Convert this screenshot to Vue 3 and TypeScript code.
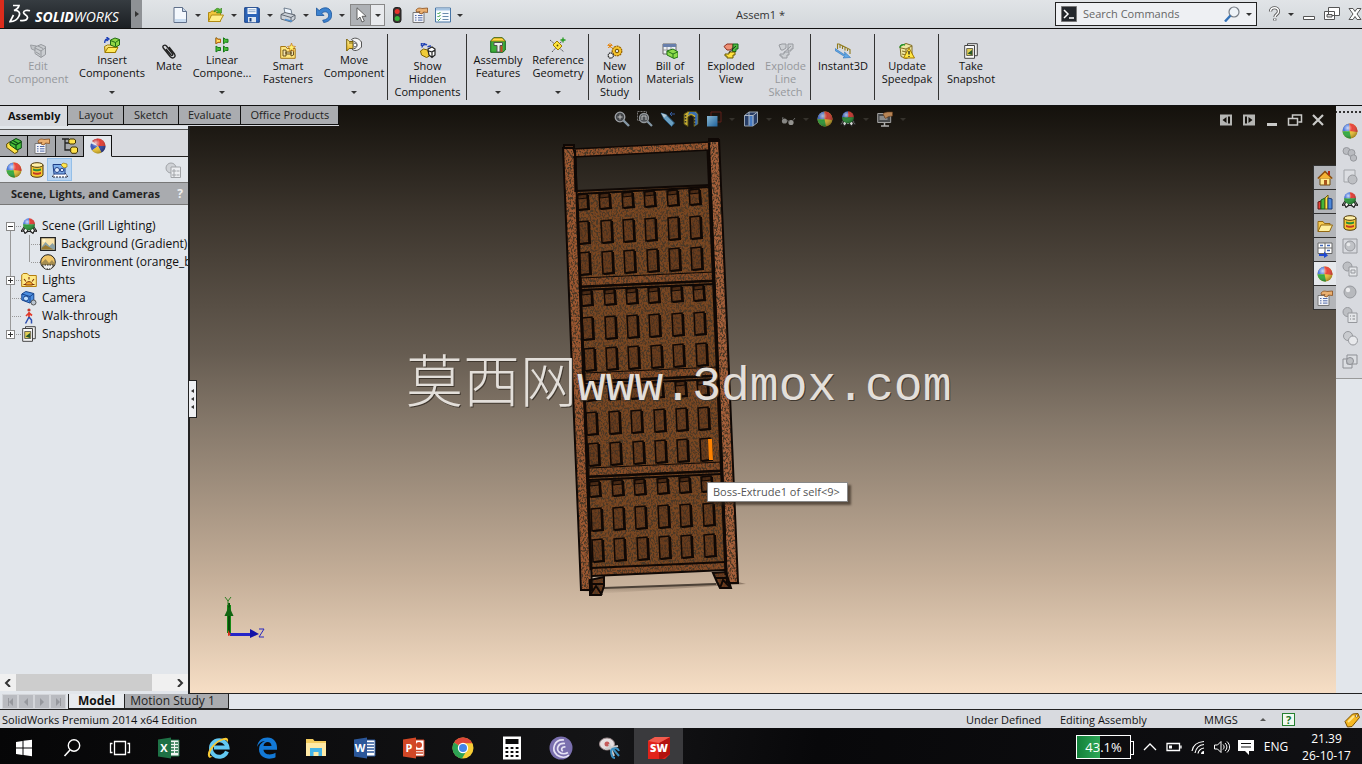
<script setup lang="ts">
interface QuickItem { icon: string; label: string; menu: boolean }
interface RibbonItem { icon: string; label: string; lines: string[]; size: string; menu?: boolean; disabled?: boolean }
interface Box { points: string; shade: string; lid: string }
interface AppItem { icon: string; label: string; letter?: string }

const quickItems: QuickItem[] = [
  { icon: 'new', label: 'New', menu: true },
  { icon: 'open', label: 'Open', menu: true },
  { icon: 'save', label: 'Save', menu: true },
  { icon: 'print', label: 'Print', menu: true },
  { icon: 'undo', label: 'Undo', menu: true },
]

const ribbon: RibbonItem[][] = [
  [
    { icon: 'edit-part', label: 'Edit Component', lines: ['Edit', 'Component'], size: 'w74', disabled: true },
    { icon: 'insert', label: 'Insert Components', lines: ['Insert', 'Components'], size: 'w74', menu: true },
    { icon: 'clip', label: 'Mate', lines: ['Mate'], size: 'w40' },
    { icon: 'pattern', label: 'Linear Component Pattern', lines: ['Linear', 'Compone...'], size: 'w66', menu: true },
    { icon: 'smart', label: 'Smart Fasteners', lines: ['Smart', 'Fasteners'], size: 'w66' },
    { icon: 'move', label: 'Move Component', lines: ['Move', 'Component'], size: 'w66', menu: true },
  ],
  [{ icon: 'hidden', label: 'Show Hidden Components', lines: ['Show', 'Hidden', 'Components'], size: 'w78' }],
  [
    { icon: 'features', label: 'Assembly Features', lines: ['Assembly', 'Features'], size: 'w60', menu: true },
    { icon: 'refgeo', label: 'Reference Geometry', lines: ['Reference', 'Geometry'], size: 'w60', menu: true },
  ],
  [{ icon: 'gear', label: 'New Motion Study', lines: ['New', 'Motion', 'Study'], size: 'w50' }],
  [{ icon: 'bom', label: 'Bill of Materials', lines: ['Bill of', 'Materials'], size: 'w59' }],
  [
    { icon: 'explode', label: 'Exploded View', lines: ['Exploded', 'View'], size: 'w60' },
    { icon: 'explode-line', label: 'Explode Line Sketch', lines: ['Explode', 'Line', 'Sketch'], size: 'w50', disabled: true },
  ],
  [{ icon: 'instant', label: 'Instant3D', lines: ['Instant3D'], size: 'w62' }],
  [{ icon: 'speedpak', label: 'Update Speedpak', lines: ['Update', 'Speedpak'], size: 'w62' }],
  [{ icon: 'snapshot', label: 'Take Snapshot', lines: ['Take', 'Snapshot'], size: 'w62' }],
]

const tabs = ['Assembly', 'Layout', 'Sketch', 'Evaluate', 'Office Products']
const panelTabs = [
  { icon: 'asm', label: 'FeatureManager' },
  { icon: 'props', label: 'PropertyManager' },
  { icon: 'config', label: 'ConfigurationManager' },
  { icon: 'beach', label: 'DisplayManager' },
]
const tree = [
  { icon: 'scene', text: 'Scene (Grill Lighting)', box: '−', level: 0 },
  { icon: 'picture', text: 'Background (Gradient)', box: '', level: 1 },
  { icon: 'envball', text: 'Environment (orange_be', box: '', level: 1 },
  { icon: 'lights', text: 'Lights', box: '+', level: 0 },
  { icon: 'camera', text: 'Camera', box: '', level: 0 },
  { icon: 'walk', text: 'Walk-through', box: '', level: 0 },
  { icon: 'snapshot', text: 'Snapshots', box: '+', level: 0 },
]
const viewTools = [
  { icon: 'zoomfit', label: 'Zoom to Fit', menu: false },
  { icon: 'zoomarea', label: 'Zoom to Area', menu: false },
  { icon: 'prev', label: 'Previous View', menu: false },
  { icon: 'section', label: 'Section View', menu: false },
  { icon: 'orient', label: 'View Orientation', menu: true },
  { icon: 'cube', label: 'Display Style', menu: true },
  { icon: 'glasses', label: 'Hide/Show Items', menu: true },
  { icon: 'ball', label: 'Edit Appearance', menu: false },
  { icon: 'scene', label: 'Apply Scene', menu: true },
  { icon: 'monitor', label: 'View Settings', menu: true },
]
const docButtons = [
  { icon: 'pane-left', label: 'Previous pane' },
  { icon: 'pane-right', label: 'Next pane' },
  { icon: 'doc-min', label: 'Minimize document' },
  { icon: 'doc-restore', label: 'Restore document' },
  { icon: 'doc-close', label: 'Close document' },
]
const taskPane = [
  { icon: 'home', label: 'Resources' },
  { icon: 'library', label: 'Design Library' },
  { icon: 'folder', label: 'File Explorer' },
  { icon: 'palette', label: 'View Palette' },
  { icon: 'ball', label: 'Appearances' },
  { icon: 'props', label: 'Custom Properties' },
]
const sideTools = ['ball', 'g-balls', 'g-page', 'scene', 'decal', 'g-frame', 'g-copy', 'g-ball', 'g-list', 'g-two', 'g-stack']
const apps: AppItem[] = [
  { icon: 'win', label: 'Start' },
  { icon: 'search', label: 'Search' },
  { icon: 'taskview', label: 'Task View' },
  { icon: 'excel', label: 'Excel', letter: 'X' },
  { icon: 'ie', label: 'Internet Explorer' },
  { icon: 'edge', label: 'Edge' },
  { icon: 'explorer', label: 'File Explorer' },
  { icon: 'word', label: 'Word', letter: 'W' },
  { icon: 'ppt', label: 'PowerPoint', letter: 'P' },
  { icon: 'chrome', label: 'Chrome' },
  { icon: 'calc', label: 'Calculator' },
  { icon: 'torrent', label: 'BitTorrent' },
  { icon: 'snip', label: 'Snipping Tool' },
  { icon: 'sw', label: 'SolidWorks', letter: 'SW' },
]

// Drawers of the rack: rows of slots follow the tilt of the posts.
const rows: { y: number; h: number }[] = []
for (const base of [195, 291, 386, 482]) {
  rows.push({ y: base, h: 15 }, { y: base + 27, h: 22 }, { y: base + 58, h: 22 })
}
const slots: Box[] = []
for (const row of rows) {
  for (let i = 0; i < 6; i++) {
    const x = Math.round(577 + (row.y - 195) * 0.043 + i * 22.4)
    const y = Math.round(row.y - i * 1.1)
    slots.push({
      points: `${x},${y} ${x + 10},${y - 1} ${x + 11},${y + row.h - 1} ${x + 1},${y + row.h}`,
      shade: `M${x + 11} ${y}l1 ${row.h - 1}l-10 1`,
      lid: row.h === 15 ? `M${x + 1} ${y}l9-1v4l-9 1z` : '',
    })
  }
}
const shelves = [283, 378, 473]
const shelfLines = shelves.map((y) => {
  const x = Math.round(577 + (y - 195) * 0.043)
  return {
    face: `${x},${y - 5} ${x + 133},${y - 11} ${x + 133},${y - 3} ${x},${y + 3}`,
    edge: `M${x} ${y + 4}l133-6M${x} ${y + 7}l133-6`,
  }
})
</script>

<template>
  <div class="app">
    <svg class="defs" width="0" height="0" aria-hidden="true">
      <defs>
        <radialGradient id="shine" cx=".35" cy=".3" r=".75"><stop offset="0" stop-color="#fff" stop-opacity=".75" /><stop offset=".4" stop-color="#fff" stop-opacity=".05" /><stop offset="1" stop-color="#000" stop-opacity=".35" /></radialGradient>
        <linearGradient id="blueface" x1="0" y1="0" x2="1" y2="1"><stop offset="0" stop-color="#9cd4f4" /><stop offset="1" stop-color="#1f6fb4" /></linearGradient>
        <linearGradient id="gold" x1="0" y1="0" x2="0" y2="1"><stop offset="0" stop-color="#fff29a" /><stop offset="1" stop-color="#e8b21e" /></linearGradient>
      </defs>
      <symbol id="new" viewBox="0 0 16 16"><path d="M2 .5h8.500l4 4v11h-12.500z" fill="#f4f8fd" stroke="#60708a" /><path d="M10.500.5v4h4" fill="#c8d8ea" stroke="#60708a" /><path d="M3 12h11v3H3z" fill="#c9dcf0" /></symbol>
      <symbol id="open" viewBox="0 0 16 16"><path d="M.5 14.500v-9h2l1-1.500h4l1 1.500h4v9z" fill="#f0c63c" stroke="#b08a12" /><path d="M.5 14.500l3-6.500h12l-3.500 6.500z" fill="#ffee8a" stroke="#b08a12" /><path d="M6 5c1-4 4-4.500 6-2.500l1.500-1.500v5h-5l1.500-1.500c-1-1-2.500-1-4 .5z" fill="#57b531" stroke="#2e7d18" stroke-width=".6" /></symbol>
      <symbol id="save" viewBox="0 0 16 16"><path d="M.7.700h13.600l1 1v13.600H.7z" fill="#2c64b8" stroke="#163f86" /><path d="M3.500 1h9v6h-9z" fill="#f4f8fc" /><path d="M4.500 2.800h7M4.500 4.700h7" stroke="#8aa5c8" /><path d="M4 10h8v5.200H4z" fill="#dce5ef" /><path d="M5.500 11h2v3.500h-2z" fill="#173f80" /></symbol>
      <symbol id="print" viewBox="0 0 16 16"><path d="M4 1l7 1.500 1 5-7-1z" fill="#eef6ff" stroke="#567" stroke-width=".8" /><path d="M1 7.500l4-2 10 2.500v4l-4 3-10-3z" fill="#cdd3da" stroke="#555c66" stroke-width=".9" /><path d="M1 7.500l10 3 4-2.500M11 10.500v4" fill="none" stroke="#555c66" stroke-width=".9" /><path d="M5 12.500l7 1.800" stroke="#4d8fd0" stroke-width="1.400" /></symbol>
      <symbol id="undo" viewBox="0 0 16 16"><path d="M.5 1v7.500h7.500l-2.300-2.300c3-2.600 7-1.200 7 2 0 2.800-2.200 4.500-6 5l1 2.300c5.300-.6 8-3.600 8-7.500C15.700.5 8-1.500 3.200 3.600z" fill="#3b82cf" stroke="#1c559c" stroke-width=".8" /></symbol>
      <symbol id="cursor" viewBox="0 0 16 16"><path d="M4 .8v12l3-2.800 2 5 2.300-1-2.200-4.700h4z" fill="#fff" stroke="#555" stroke-width=".9" /></symbol>
      <symbol id="traffic" viewBox="0 0 16 16"><rect x="4.500" y=".5" width="7.500" height="15" rx="2.500" fill="#3a322e" stroke="#222" /><circle cx="8.200" cy="4.500" r="2.500" fill="#e8332c" /><circle cx="8.200" cy="11.500" r="2.500" fill="#35b33a" /></symbol>
      <symbol id="props" viewBox="0 0 16 16"><path d="M1 5.500h11v10H1z" fill="#f3f4f8" stroke="#777" /><path d="M3 8.500h1.500M6 8.500h4.500M3 10.800h1.500M6 10.800h4.500M3 13.100h1.500M6 13.100h4.500" stroke="#4f69a8" /><path d="M4 3c2-2.500 4-2 6-1.500L15.500 1v4.500l-4-.5-1.500 2-3-1 1-1.500L4.500 5z" fill="#eab071" stroke="#8a4f1d" stroke-width=".8" /></symbol>
      <symbol id="options" viewBox="0 0 16 16"><path d="M.5 1h15v14H.5z" fill="#f6fbff" stroke="#4775a5" /><path d="M1 1.500h14v2H1z" fill="#a6c5e3" /><path d="M2.500 6l1 1L5.500 5M2.500 9l1 1 2-2M2.500 12.500l1 1 2-2" fill="none" stroke="#2c9a35" /><path d="M7.500 6.500h6M7.500 9.500h6M7.500 12.500h6" stroke="#688bad" /></symbol>
      <symbol id="edit-part" viewBox="0 0 16 16"><path d="M.5 2l6 1v5l-5-2z" fill="#c0c3c7" stroke="#9b9ea3" /><path d="M5 4l6-2.500 4.500 2v8l-4.500 3-6-4z" fill="#c9ccd0" stroke="#95989d" /><path d="M5 5l6 3 4-3M11 8v6M8 3l5 2.500M6 9l4 2.500" fill="none" stroke="#95989d" /></symbol>
      <symbol id="insert" viewBox="0 0 16 16"><path d="M1 15.500l-.5-6 3-1.500h10l-2 7.500z" fill="url(#gold)" stroke="#9d7b00" /><path d="M1 15.500l3-5h10l-3 5z" fill="#ffe95a" stroke="#9d7b00" /><path d="M6.500 3l4.500-2 4.500 1.500V8l-4 2-5-2z" fill="#8fd645" stroke="#1f6b14" /><path d="M6.500 3.500l5 2 4-3M11.500 5.500v4" fill="none" stroke="#1f6b14" /><path d="M.7 6c0-3 1-4 3-4M2.500 0L5 2 2.500 4" fill="none" stroke="#1539b5" stroke-width="1.300" /></symbol>
      <symbol id="clip" viewBox="0 0 16 16"><path d="M5 6l5 6c1 1 2.300 0 1.500-1.200L5.500 3C3.500 1 1 3 2.300 5l7 8.800c2.500 2.700 6 .2 4.200-2.800L8 4" fill="none" stroke="#222" stroke-width="1.400" /></symbol>
      <symbol id="pattern" viewBox="0 0 16 16"><path d="M2 .8v6l2-1.500h2.500V2.300H4zM9.500.8v6l2-1.500H14v-3h-2.500zM2 9v6l2-1.500h2.500v-3H4zM9.500 9v6l2-1.500H14v-3h-2.500z" fill="#46bc35" stroke="#18791a" /><path d="M2 .8v6l2-1.500h2.500V2.300H4z" fill="#ffe25e" stroke="#c25d13" /></symbol>
      <symbol id="smart" viewBox="0 0 16 16"><path d="M.7 3.500h5l1.500 2h8v9.800H.7z" fill="#ffe680" stroke="#a77714" /><path d="M3 7h3v6H3zM6 9h5v2H6zM11 7l2.500 1v4L11 13z" fill="#f3e3b0" stroke="#5b4310" stroke-width=".9" /><path d="M11.500 0l1 3 3 .5-2.500 2 .8 3-2.300-1.700L9 8.500l1-3-2.500-2 3-.5z" fill="#fff36e" stroke="#c67718" stroke-width=".7" /></symbol>
      <symbol id="move" viewBox="0 0 16 16"><path d="M.7 2v12l2.500-2.500H7v-7H3.200zM3 6h4" fill="url(#gold)" stroke="#7b6208" /><path d="M5.500 2.500c4-3 8-.5 10 2.500v5c-3 4-8 4.500-9.500 2 2.500 0 4.500-1 5-3 .5-2.500-1-4-2.500-4.500-1-.5-2.500-1-3-2z" fill="#f4f4f5" stroke="#555" /><circle cx="9" cy="8" r="1.800" fill="#fff" stroke="#777" /></symbol>
      <symbol id="hidden" viewBox="0 0 16 16"><path d="M.5 8l3-2 4 1 2 6-3 1.500-5-2.500z" fill="#f0cc38" stroke="#806400" /><path d="M8 6l4-2 3 2v6l-3 2.500L9 12zM9 8l3 1 3-2M12 9v5" fill="#fff" stroke="#222" stroke-width="1.200" /><path d="M2 4.500C2 2 5 .5 7 2M5 0H1.500v3M7.500 4C9 3 10 3 11 3" fill="none" stroke="#2445b5" stroke-width="1.500" /></symbol>
      <symbol id="features" viewBox="0 0 16 16"><path d="M.7 4l3-3.300h8.600l3 3.300v9l-2.500 2.300H.7z" fill="#3dad39" stroke="#14631a" /><path d="M1 4l3-3h8l3 3z" fill="#ffdc49" stroke="#a77a06" stroke-width=".8" /><path d="M4 5.500h8.500v3h-2.500v6.500H7V8.500H4z" fill="#eceeed" stroke="#515251" /><path d="M10.500 9h2v6h-2z" fill="#c84525" /></symbol>
      <symbol id="refgeo" viewBox="0 0 16 16"><path d="M0 3l14 12M2 15L12 4" stroke="#555" stroke-dasharray="2 1" /><path d="M3 8l4-4 5 5-4 4z" fill="#ffe53e" stroke="#9d7b00" /><circle cx="7.500" cy="8.500" r=".9" fill="#5a4a00" /><path d="M10.500 3h5M13 .5v5" stroke="#229a1d" stroke-width="1.300" /></symbol>
      <symbol id="gear" viewBox="0 0 16 16"><path d="M3 0v5M.5 2.500h5M1 1l4 4M5 1L1 5" stroke="#e5830b" stroke-width=".9" /><circle cx="10" cy="8" r="4.800" fill="#f7c52c" stroke="#9b6600" stroke-width="1.300" stroke-dasharray="2 .7" /><circle cx="10" cy="8" r="1.800" fill="#dee0e2" stroke="#6b4a00" /><circle cx="3.800" cy="12.500" r="2.600" fill="#eee" stroke="#333" stroke-width="1.300" stroke-dasharray="1.500 .5" /></symbol>
      <symbol id="bom" viewBox="0 0 16 16"><path d="M1 1h13v10H1z" fill="#edf0f5" stroke="#666" /><path d="M1 1h13v3H1z" fill="#687fac" /><path d="M1 7h13M5 4v7M9 4v7" stroke="#888" stroke-width=".8" /><path d="M5 8l6-2 5 3v5l-4 1.500L5 12z" fill="#8edb4b" stroke="#237519" /><path d="M5 8l6 3 4.500-2M11 11v4" fill="none" stroke="#237519" /></symbol>
      <symbol id="explode" viewBox="0 0 16 16"><path d="M1 3.500L4 1h6v4L7 7H4z" fill="#ee9075" stroke="#8b2e1f" /><path d="M10 1h5v5h-2v2.500H9.500V5h.5z" fill="#4fbd3e" stroke="#136718" /><path d="M2 11h4V9h6v3h-2v3H4v-2H2z" fill="#ffe13f" stroke="#695800" /><path d="M6 9.500L13 3" stroke="#222" /></symbol>
      <symbol id="explode-line" viewBox="0 0 16 16"><path d="M1 2l3-1h4v4L5 7H3zM10 1h5v5h-2v2h-3zM2 11h4V9h5v3h-2v3H4v-2H2zM6 9.500L13 3" fill="#cdd0d4" stroke="#96999e" /></symbol>
      <symbol id="instant" viewBox="0 0 16 16"><path d="M2.500 6V1h1.500l11 5.500V11M5 2v3M7.500 3v3M10 4.500v3M12.500 6v2" fill="none" stroke="#8f7a1a" stroke-width="1.100" /><path d="M0 5.500l10 6.500-.5-3 6 5.500-7.500.5 1.500-1.500L0 7.500z" fill="#61a8e6" stroke="#2c71b8" stroke-width=".6" /></symbol>
      <symbol id="speedpak" viewBox="0 0 16 16"><path d="M1 3l6-2.500 6 2V13l-6 2.500-5-2z" fill="#eee6a1" stroke="#816d26" /><path d="M2 5l5 1 6-3M7 6v9M3 8l4 1M3 11l4 1" fill="none" stroke="#816d26" /><path d="M10 5l5.500 10h-11z" fill="#ffe642" stroke="#a47900" /><path d="M10 8v3.500M10 13v1" stroke="#222" stroke-width="1.300" /><path d="M1 5c0-3 3-4 5-3" fill="none" stroke="#22952a" stroke-width="1.400" /></symbol>
      <symbol id="snapshot" viewBox="0 0 16 16"><path d="M4.500.7h9.800v12H4.500z" fill="#eee" stroke="#444" /><path d="M1.700 2.500h9.800v12.800H1.700z" fill="#fafafa" stroke="#444" /><path d="M3.700 5.500h6v7h-6z" fill="#e3cf56" stroke="#333" stroke-width=".7" /><path d="M4.500 10.500l4.500-3.500v5z" fill="#27572a" /></symbol>
      <symbol id="ball" viewBox="0 0 16 16"><circle cx="8" cy="8" r="7.500" fill="#eabf2c" /><path d="M7.500 8V.500A7.500 7.500 0 0 0 .5 8.500z" fill="#3d6ede" /><path d="M7.500 8L.5 8.500A7.500 7.500 0 0 0 9 15.500z" fill="#2aa838" /><path d="M7.500 8V.500A7.500 7.500 0 0 1 15.400 9z" fill="#e83c31" /><circle cx="8" cy="8" r="7.500" fill="url(#shine)" /></symbol>
      <symbol id="beach" viewBox="0 0 16 16"><circle cx="8" cy="8" r="7.500" fill="#d6dae0" /><path d="M8 8V.500A7.500 7.500 0 0 1 15.500 8z" fill="#e03329" /><path d="M8 8L2 3a7.500 7.500 0 0 1 6-2.500z" fill="#c41f1f" /><path d="M8 8L1 5.500a7.500 7.500 0 0 0 1 7z" fill="#3350b6" /><path d="M8 8h7.500a7.500 7.500 0 0 1-4 6.500z" fill="#2b3d9c" /><path d="M8 8l3.500 6.500a7.500 7.500 0 0 1-9.500-2z" fill="#f0c527" /><circle cx="8" cy="8" r="7.500" fill="url(#shine)" /></symbol>
      <symbol id="scene" viewBox="0 0 16 16"><path d="M0 13.500L3 9h10l3 4.500-3-.5-1 2.500-2.500-2h-3L4 15.500 3 13z" fill="#f4f4f4" stroke="#222" stroke-width="1.100" /><path d="M4 10l-2 3M7 12l-1 2M12 10l2 3M9 12l1 2" stroke="#222" stroke-width="1.300" /><path d="M8 6.500V.300A6 6 0 0 0 2 6.500z" fill="#3e6cda" /><path d="M8 6.500V.300A6 6 0 0 1 14 6.500z" fill="#df342c" /><path d="M2 6.300a6 6 0 0 0 12 0z" fill="#239533" /><circle cx="8" cy="6.300" r="6" fill="url(#shine)" /></symbol>
      <symbol id="decal" viewBox="0 0 16 16"><path d="M2 3v10c1 3 11 3 12 0V3z" fill="#f6c832" stroke="#4e3808" /><ellipse cx="8" cy="3" rx="6" ry="2.300" fill="#fff0a8" stroke="#4e3808" /><path d="M4 6.500c2 1 6 1 8 0v2c-2 1-6 1-8 0z" fill="#2a8e3a" /><path d="M4 10c2 1 6 1 8 0v2c-2 1-6 1-8 0z" fill="#c43a25" /></symbol>
      <symbol id="scenecam" viewBox="0 0 16 16"><path d="M0 15l3-4h10l3 4z" fill="#fff" stroke="#223" stroke-dasharray="2 1" /><path d="M1 2.500h8l2 2h2V12H2z" fill="#7fb0ea" stroke="#1f3e86" /><circle cx="5" cy="8" r="2.500" fill="#dceafd" stroke="#1f3e86" /><circle cx="10" cy="8" r="1.800" fill="#dceafd" stroke="#1f3e86" /><path d="M9 3l2-2 4 1v3l-3 1z" fill="#ffe64e" stroke="#92751b" stroke-width=".7" /></symbol>
      <symbol id="asm" viewBox="0 0 16 16"><path d="M.7 6l3-2 8 7v3l-3 1.500-8-6z" fill="#ffe348" stroke="#5c4a00" /><path d="M4 4l6-3.500 5.300 2.500v7L11 12 4 7z" fill="#48bd3a" stroke="#0c4a14" /><path d="M4 4l6 3 5-3M10 7v4M7 2.500l5 3" fill="none" stroke="#0c4a14" stroke-width="1.200" /></symbol>
      <symbol id="config" viewBox="0 0 16 16"><path d="M0 1h7M3 1v11h5M3 5h5" fill="none" stroke="#222" stroke-width="1.300" /><path d="M8 1h4l1.500 1v3l-1.500 1H8L6.800 5V2zM10 9h4l1.500 1v4L14 15.300h-4L8.700 14v-4z" fill="#ffe14a" stroke="#3d3000" /></symbol>
      <symbol id="ball-list" viewBox="0 0 16 16"><circle cx="6" cy="6" r="5" fill="#cfd2d6" stroke="#a1a4a8" /><path d="M6 5h9.500v10.500H6z" fill="#eceef1" stroke="#a1a4a8" /><path d="M8 8h2v2H8zM8 12h2v2H8zM11.500 9h3M11.500 13h3" fill="none" stroke="#a1a4a8" /></symbol>
      <symbol id="picture" viewBox="0 0 16 16"><path d="M.7 1.700h14.600v12.600H.7z" fill="#f8e2a8" stroke="#222" stroke-width="1.300" /><path d="M1.500 11l4-5 4 4 3-3 2.500 3v3.500h-13.500z" fill="#8aa0a4" /><path d="M1.500 12l4-3 8 4.500h-12z" fill="#9a7a30" /><circle cx="4" cy="4.500" r="1.500" fill="#fff6d0" /></symbol>
      <symbol id="envball" viewBox="0 0 16 16"><circle cx="8" cy="8" r="7.300" fill="#f1c668" stroke="#222" /><path d="M1.500 9l4-4 3.500 4 3-3 2.800 3.500-2 3.500H4z" fill="#a58d52" /><path d="M2 11h12l-3 4H5z" fill="#eee" stroke="#222" stroke-dasharray="1.500 1" /></symbol>
      <symbol id="lights" viewBox="0 0 16 16"><path d="M.7 14.500V3l1.500-1.500h4L8 3.500h7.300v11z" fill="#ffe985" stroke="#b27c0e" /><path d="M4.500 13c0-4.500 7-4.500 7 0z" fill="#f7ad28" stroke="#803008" /><path d="M8 5v2.500M3 7l2 2.500M13 7l-2 2.500M2.500 12.500h2M11.500 12.500h2" stroke="#803008" stroke-width="1.100" /></symbol>
      <symbol id="camera" viewBox="0 0 16 16"><path d="M.8 4l4-2.500 8 2V10l-4 3-8-3z" fill="#4d8fe0" stroke="#17458e" /><path d="M1 4l8 2.500 4-3M9 6.500V13" fill="none" stroke="#17458e" /><circle cx="5" cy="8.500" r="2.500" fill="#bfe0ff" stroke="#17458e" /><circle cx="12.500" cy="12.500" r="2.500" fill="#b9c4d0" stroke="#555" /></symbol>
      <symbol id="walk" viewBox="0 0 16 16"><circle cx="8" cy="2" r="1.600" fill="#c0392b" /><path d="M8 4v5M8 5L5 8M8 5l3 2.500" stroke="#e23a2a" stroke-width="1.700" fill="none" /><path d="M8 9l-3.500 6.500M8 9l2.500 3v3.500" stroke="#2d4fae" stroke-width="1.500" fill="none" /></symbol>
      <symbol id="zoomfit" viewBox="0 0 16 16"><circle cx="6" cy="6" r="4.800" fill="#4a4e53" stroke="#b9bdc3" stroke-width="1.300" /><path d="M3.500 6h5M6 3.500v5" stroke="#ddd" /><path d="M9.500 9.500l5.500 5.500" stroke="#98aebf" stroke-width="2.400" /></symbol>
      <symbol id="zoomarea" viewBox="0 0 16 16"><path d="M.5.5h9v9h-9z" fill="none" stroke="#888" stroke-dasharray="2 1" /><circle cx="7" cy="7" r="4.500" fill="#555b61" stroke="#a9afb5" stroke-width="1.300" /><path d="M5 9V5h4v4" stroke="#ddd" fill="none" /><path d="M10.500 10.500l4.500 4.500" stroke="#98aebf" stroke-width="2.200" /></symbol>
      <symbol id="prev" viewBox="0 0 16 16"><path d="M1 2l5 1.500L14.500 12 11.500 15.500 4 8z" fill="#7ab9e2" stroke="#275d86" /><path d="M1 2l3 5 3-3z" fill="#cfe9f8" /><path d="M15 3h-5l2-2M10 3l2 2" fill="none" stroke="#3a68b8" /></symbol>
      <symbol id="section" viewBox="0 0 16 16"><path d="M1 3l4-2.500h8L15 3v10l-4 2.500V6L8 4 5 6v9.500L1 13z" fill="#e4c83a" stroke="#5b5210" /><path d="M5 4.500l3-2 4 2V15l2.500-2V3L12 1H6z" fill="#3e7ed0" /><path d="M2.500 4v9M11.500 6v8" stroke="#333" stroke-dasharray="1.500 1.500" stroke-width="1.500" /></symbol>
      <symbol id="orient" viewBox="0 0 16 16"><path d="M5 1h10v10H5z" fill="none" stroke="#6d231c" /><path d="M1 5h10.500v10.500H1z" fill="url(#blueface)" /></symbol>
      <symbol id="cube" viewBox="0 0 16 16"><path d="M1.500 4.500L6 1h8.500v10.500L10 15H1.500z" fill="#2a4475" stroke="#adbcce" /><path d="M6 4.500h4.500V15H6z" fill="#4e8ce2" /><path d="M1.500 4.500H10L14.500 1M10 4.500V15M6 1v13.500" fill="none" stroke="#c7d4e4" /></symbol>
      <symbol id="glasses" viewBox="0 0 16 16"><circle cx="4.500" cy="10" r="2.600" fill="#9b9b99" /><circle cx="11" cy="11.500" r="2.600" fill="#aaa9a6" /><path d="M6.500 9.500l3 1M2.500 8L3 6M13 9.500L15 7" stroke="#777" /></symbol>
      <symbol id="monitor" viewBox="0 0 16 16"><path d="M.7 2.500h13v9H.7z" fill="#4f5255" stroke="#bbb" /><path d="M2.500 6h5M2.500 8h8" stroke="#eee" /><path d="M4 15h8M7.500 12v2.500" stroke="#ccc" stroke-width="1.500" /><path d="M6 3c2-2 4-2 9.500-2v4l-4 .5-3 2z" fill="#d29862" stroke="#75431f" stroke-width=".6" /></symbol>
      <symbol id="pane-left" viewBox="0 0 16 16"><path d="M2 2.500h12v11H2z" fill="#b5b5b3" /><path d="M8.500 5v6L4.500 8zM10 4.500h2v7h-2z" fill="#14110c" /></symbol>
      <symbol id="pane-right" viewBox="0 0 16 16"><path d="M2 2.500h12v11H2z" fill="#b5b5b3" /><path d="M7.500 5v6l4-3zM4 4.500h2v7H4z" fill="#14110c" /></symbol>
      <symbol id="doc-min" viewBox="0 0 16 16"><path d="M3 11h10v3H3z" fill="#c9c9c7" /></symbol>
      <symbol id="doc-restore" viewBox="0 0 16 16"><path d="M5.500 6V3h9v7h-3M1.500 6.500h9V13h-9z" fill="none" stroke="#c9c9c7" stroke-width="1.500" /></symbol>
      <symbol id="doc-close" viewBox="0 0 16 16"><path d="M3 3l10 10M13 3L3 13" stroke="#c9c9c7" stroke-width="2.200" /></symbol>
      <symbol id="home" viewBox="0 0 16 16"><path d="M3 8h10v7H3z" fill="#ffe98b" stroke="#6e4b12" /><path d="M.8 8.500L8 1.500l7.200 7" fill="#f6b234" stroke="#8a4c0c" stroke-width="1.500" /><path d="M7 10h3v5H7z" fill="#a8571d" /><path d="M12 1v4" stroke="#b32b17" stroke-width="2" /></symbol>
      <symbol id="library" viewBox="0 0 16 16"><path d="M1 8l3-1v8H1z" fill="#e6423a" stroke="#5d1713" /><path d="M4 6l4-2v11H4z" fill="#45b53b" stroke="#135d17" /><path d="M8 4l3-3v14H8z" fill="#ffe34d" stroke="#6f5b0b" /><path d="M11 4l4 1v10h-4z" fill="#4d88da" stroke="#193b7b" /></symbol>
      <symbol id="folder" viewBox="0 0 16 16"><path d="M1 13.500v-10h5l1.500 2H13v2" fill="#f5ca50" stroke="#936812" /><path d="M1 13.500l3-6.500h11.500l-3 6.500z" fill="#fff0a0" stroke="#936812" /></symbol>
      <symbol id="palette" viewBox="0 0 16 16"><path d="M1 1h14v10.500H1z" fill="#fff" stroke="#666" /><path d="M8 1v10M1 6h14" stroke="#666" /><path d="M3 3.500h3M10 3.500h3M10 8.500h3" stroke="#3c64b8" stroke-width="1.500" /><path d="M2 12h5V9.500l4 4-4 2.500v-2H2z" fill="#1f49d0" /></symbol>
      <symbol id="g-balls" viewBox="0 0 16 16"><g fill="#b9bbc0" stroke="#96989d"><circle cx="4.500" cy="5" r="3.500" /><circle cx="9.500" cy="7" r="3.500" /><circle cx="11.500" cy="12" r="3.200" /></g></symbol>
      <symbol id="g-page" viewBox="0 0 16 16"><path d="M2 1h11v12H2z" fill="#dcdee2" stroke="#a1a4a8" /><circle cx="10.500" cy="10.500" r="4.500" fill="#bdbfc3" stroke="#96989d" /></symbol>
      <symbol id="g-frame" viewBox="0 0 16 16"><path d="M1 1h14v14H1z" fill="none" stroke="#96989d" /><circle cx="8" cy="8" r="5" fill="#c1c3c7" stroke="#96989d" /><circle cx="6.500" cy="6.500" r="1.800" fill="#e8e9eb" /></symbol>
      <symbol id="g-copy" viewBox="0 0 16 16"><circle cx="5.500" cy="5.500" r="4.500" fill="#bdbfc3" stroke="#96989d" /><path d="M7 6h8v9H7zM9 9h4v3H9z" fill="#e4e6e9" stroke="#96989d" /></symbol>
      <symbol id="g-ball" viewBox="0 0 16 16"><circle cx="8" cy="8" r="6" fill="#b7b9bd" stroke="#96989d" /><circle cx="6" cy="6" r="2.200" fill="#ececee" /></symbol>
      <symbol id="g-list" viewBox="0 0 16 16"><circle cx="5.500" cy="5" r="4.500" fill="#bdbfc3" stroke="#96989d" /><path d="M6 6h9v9.500H6z" fill="#e4e6e9" stroke="#96989d" /><path d="M8 9h1M8 12h1M10.500 9H13M10.500 12H13" stroke="#85878b" /></symbol>
      <symbol id="g-two" viewBox="0 0 16 16"><circle cx="6" cy="6" r="4.500" fill="#c9cbcf" stroke="#96989d" /><circle cx="11" cy="10.500" r="4.500" fill="#e8e9ec" stroke="#96989d" /></symbol>
      <symbol id="g-stack" viewBox="0 0 16 16"><path d="M5 2h10v9H5zM1 6h9v9H1z" fill="#dcdee2" stroke="#8d8f94" /><circle cx="8" cy="8" r="3.500" fill="#bdbfc3" stroke="#8d8f94" /></symbol>
      <symbol id="lens" viewBox="0 0 16 16"><circle cx="10" cy="6" r="5" fill="#eef3f8" stroke="#777d85" stroke-width="1.200" /><path d="M6.500 9.500L1 15.500" stroke="#3472b8" stroke-width="2.400" /></symbol>
      <symbol id="prompt" viewBox="0 0 16 16"><path d="M.5.5h15v15H.5z" fill="#23272c" stroke="#777" /><path d="M3 4l4 4-4 4M8 12h5" fill="none" stroke="#fff" stroke-width="1.500" /></symbol>
      <symbol id="help" viewBox="0 0 16 16"><path d="M4.500 5.500c0-5 8-5 8 0 0 3-3.500 3-3.500 5.500M8.800 12.500v2" fill="none" stroke="#555" stroke-width="3.200" /><path d="M4.500 5.500c0-5 8-5 8 0 0 3-3.500 3-3.500 5.500M8.800 12.800v1.500" fill="none" stroke="#fff" stroke-width="1.500" /></symbol>
      <symbol id="win-min" viewBox="0 0 16 16"><path d="M2.500 10.500h11v3h-11z" fill="#fff" stroke="#555" /></symbol>
      <symbol id="win-restore" viewBox="0 0 16 16"><path d="M4.500 1.500h11v8h-11zM.500 5.500h10v8H.5z" fill="#fff" stroke="#555" /><path d="M3 8.500h5V11H3z" fill="#ddd" stroke="#555" /></symbol>
      <symbol id="win-close" viewBox="0 0 16 16"><path d="M2 2.500h4l2 3 2-3h4L10 8l4 5.500h-4l-2-3-2 3H2L6 8z" fill="#fff" stroke="#555" /></symbol>
      <symbol id="tag" viewBox="0 0 16 16"><path d="M1 9.500L8.500 2l5.500-.5 1.500 4L8 14.500 3.500 15z" fill="#f6b821" stroke="#7c5000" /><path d="M4 10l6-6" stroke="#ffe68c" stroke-width="2" /><circle cx="12.500" cy="4" r="1.200" fill="#fff" stroke="#7c5000" stroke-width=".7" /></symbol>
      <symbol id="win" viewBox="0 0 24 24"><path d="M4 6l6.500-1v6.500H4zM11.500 4.800L20 3.700v7.800h-8.500zM4 12.500h6.500V19L4 18zM11.500 12.500H20v7.800l-8.500-1.200z" fill="#fff" /></symbol>
      <symbol id="search" viewBox="0 0 24 24"><circle cx="14" cy="9.500" r="5.700" fill="none" stroke="#fff" stroke-width="1.400" /><path d="M10 14l-5.500 6" stroke="#fff" stroke-width="1.600" /></symbol>
      <symbol id="taskview" viewBox="0 0 24 24"><path d="M6.500 5.500h11v13h-11zM4.500 7.500h-2v9h2M19.500 7.500h2v9h-2" fill="none" stroke="#fff" stroke-width="1.300" /></symbol>
      <symbol id="excel" viewBox="0 0 24 24"><path d="M12 4h10v16H12z" fill="#f0f5f1" stroke="#1e7145" /><path d="M14 7h3M18 7h3M14 10h3M18 10h3M14 13h3M18 13h3M14 16h3M18 16h3" stroke="#1e7145" stroke-width="1.500" /><path d="M1 3.500L14 1.500v21L1 20.500z" fill="#1e7145" /></symbol>
      <symbol id="word" viewBox="0 0 24 24"><path d="M12 4h10v16H12z" fill="#fff" stroke="#2b579a" /><path d="M14 7h7M14 10h7M14 13h7M14 16h7" stroke="#2b579a" stroke-width="1.300" /><path d="M1 3.500L14 1.500v21L1 20.500z" fill="#2b579a" /></symbol>
      <symbol id="ppt" viewBox="0 0 24 24"><path d="M12 4h10v16H12z" fill="#fff" stroke="#d24726" /><circle cx="17" cy="9" r="3" fill="#d24726" /><path d="M14 14.500h7M14 17h7" stroke="#d24726" stroke-width="1.400" /><path d="M1 3.500L14 1.500v21L1 20.500z" fill="#d24726" /></symbol>
      <symbol id="ie" viewBox="0 0 24 24"><path d="M21 15.500a8.300 8.300 0 1 1 .5-4H8" fill="none" stroke="#62c8f2" stroke-width="4" /><path d="M3 21.500C-1.500 17 8 5 17 2.200c5-1.700 6 1 4.500 4.500C21.500 2 13 4 8 10.500 4 15.500 2 21 6.500 20.500c-1.200 1-2.500 1.500-3.500 1z" fill="#f7ca36" /></symbol>
      <symbol id="edge" viewBox="0 0 24 24"><path d="M2 11C3 4.500 7 1.500 12.500 1.500c6 0 9.500 4.500 9.500 10v2.300H8.500c.3 5 7 6 12 3v4.500c-7 3.500-16.500.5-16.500-8C4 9.500 6 6.500 10 5 6 5 3.500 8 2 11zm6.500-1h8c.2-5.500-7.500-5.500-8 0z" fill="#1379d6" /></symbol>
      <symbol id="explorer" viewBox="0 0 24 24"><path d="M2 3h7l1.500 2H22v15H2z" fill="#f3cb5e" /><path d="M2 7h20v13H2z" fill="#ffe9a5" /><path d="M6 20v-8h12v8h-3.500v-4h-5v4z" fill="#44b3e6" /></symbol>
      <symbol id="chrome" viewBox="0 0 24 24"><circle cx="12" cy="12" r="10.500" fill="#f7cc35" /><path d="M12 12L3 6.500A10.500 10.500 0 0 1 21.400 7.300H12z" fill="#dd4739" /><path d="M12 12L3 6.500a10.500 10.500 0 0 0 8 16l5-8.500z" fill="#2da354" /><circle cx="12" cy="12" r="5.200" fill="#fff" /><circle cx="12" cy="12" r="4" fill="#4285ea" /></symbol>
      <symbol id="calc" viewBox="0 0 24 24"><path d="M3 .5h18v23H3z" fill="#fff" /><path d="M5.500 3h13v5h-13z" fill="#0b0b0c" /><path d="M5.500 12h13M5.500 16h13M5.500 20h13" stroke="#0b0b0c" stroke-width="2" stroke-dasharray="2.800 2.300" /></symbol>
      <symbol id="torrent" viewBox="0 0 24 24"><circle cx="12" cy="12" r="11.500" fill="#7a6fae" /><path d="M15 4C5 3 2 14 8 19c4 3 9 3 12 0M16 7.500C9 6.500 7 13 10 16c3 2.500 7 2 9 .5M16.500 11c-4-.5-5 3-2.500 4" fill="none" stroke="#e6e2f4" stroke-width="1.700" /></symbol>
      <symbol id="snip" viewBox="0 0 24 24"><ellipse cx="9" cy="8" rx="7.500" ry="6" fill="#e5dedf" stroke="#9c8b8d" /><circle cx="9" cy="8" r="2.500" fill="#c55a59" /><path d="M7 13L20 10M11 8l5 12" stroke="#ccc" stroke-width="2" /><path d="M13 14c3-3 7-2 8 1M13 14c0 5 1 8 4 8M15 13l6 7" fill="none" stroke="#3c8fc0" stroke-width="2" /></symbol>
      <symbol id="sw" viewBox="0 0 24 24"><path d="M1 5l7-4h15v17l-5 5H1z" fill="#e2231a" /><path d="M12 7l11-6v17l-8 5h-3z" fill="#b3130f" /><path d="M1 5l7-4h15l-11 6z" fill="#f15c4e" /></symbol>
      <symbol id="t-caret" viewBox="0 0 16 16"><path d="M2 11l6-6 6 6" fill="none" stroke="#fff" stroke-width="1.300" /></symbol>
      <symbol id="t-battery" viewBox="0 0 16 16"><path d="M1 4.500h12.500v7H1zM15 6.500v3" fill="none" stroke="#fff" stroke-width="1.300" /><path d="M3 6.500h3v3H3z" fill="#fff" /></symbol>
      <symbol id="t-wifi" viewBox="0 0 16 16"><path d="M2 12C3 6 7 3 14 2.500M5 14C6 9 9 6 14 5.500M8 14.500c.5-3 3-5 6-5.500" fill="none" stroke="#fff" stroke-width="1.200" /><path d="M11 15c0-2 1.500-3 3-3v3z" fill="#fff" /></symbol>
      <symbol id="t-volume" viewBox="0 0 16 16"><path d="M.5 6h3L7 2.500v11L3.500 10h-3zM9 5.500c1.500 1.500 1.500 3.500 0 5M11 4c2.500 2.500 2.500 5.500 0 8M13 2.500c3.500 3.500 3.500 7.500 0 11" fill="none" stroke="#fff" /></symbol>
      <symbol id="t-action" viewBox="0 0 16 16"><path d="M0 1h16v11h-5v4l-4-4H0z" fill="#fff" /><path d="M3 4.500h10M3 8h10" stroke="#111" stroke-width="1.200" /></symbol>
      <filter id="grain" x="0" y="0" width="100%" height="100%">
        <feTurbulence type="fractalNoise" baseFrequency=".6 .4" numOctaves="3" seed="7" result="noise" />
        <feColorMatrix in="noise" values="0 0 0 0 .07  0 0 0 0 .04  0 0 0 0 .02  4.500 0 0 0 -1.900" result="dark" />
        <feComposite in="dark" in2="SourceGraphic" operator="in" result="spots" />
        <feMerge><feMergeNode in="SourceGraphic" /><feMergeNode in="spots" /></feMerge>
      </filter>
    </svg>

    <header class="titlebar">
      <div class="brand">
        <svg class="ds" viewBox="0 0 22 20" aria-hidden="true"><path d="M4 1.500h6c-.5 2.500-2.500 4-5 5 5-.5 6.500 2.500 5 5.500C8.500 15.500 5 17.500 1 17.700L4.500 11M21 6.800c-3-1-6.300-.3-6.500 1.700-.2 2.200 4.700 2.500 4 5.300-.6 2.500-4 3.200-7.500 2.700" fill="none" stroke="#fff" stroke-width="1.700" /></svg>
        <span class="wordmark"><b>SOLID</b>WORKS</span>
      </div>
      <button class="brand-arrow" aria-label="Show menu"><i class="right-caret"></i></button>
      <div class="quick">
        <template v-for="q in quickItems" :key="q.icon">
          <button class="q-icon" :aria-label="q.label"><svg class="i16"><use :href="'#' + q.icon" /></svg></button>
          <button class="q-menu" :aria-label="q.label + ' menu'"><i class="caret"></i></button>
        </template>
        <div class="select-tool">
          <button class="pick" aria-label="Select"><svg class="i16"><use href="#cursor" /></svg></button>
          <button class="pick-menu" aria-label="Select menu"><i class="caret"></i></button>
        </div>
        <button class="q-wide" aria-label="Rebuild"><svg class="i16"><use href="#traffic" /></svg></button>
        <button class="q-wide" aria-label="File properties"><svg class="i16"><use href="#props" /></svg></button>
        <button class="q-wide" aria-label="Options"><svg class="i16"><use href="#options" /></svg></button>
        <button class="q-menu" aria-label="Options menu"><i class="caret"></i></button>
      </div>
      <div class="doc-title">Assem1 *</div>
      <label class="searchbox">
        <svg class="i16"><use href="#prompt" /></svg>
        <input type="text" placeholder="Search Commands" aria-label="Search Commands" />
        <svg class="i16"><use href="#lens" /></svg>
        <i class="caret"></i>
      </label>
      <div class="win-buttons">
        <button aria-label="Help"><svg class="i16"><use href="#help" /></svg></button>
        <button class="slim" aria-label="Help menu"><i class="caret"></i></button>
        <button aria-label="Minimize"><svg class="i16"><use href="#win-min" /></svg></button>
        <button aria-label="Restore"><svg class="i16"><use href="#win-restore" /></svg></button>
        <button aria-label="Close"><svg class="i16"><use href="#win-close" /></svg></button>
      </div>
    </header>

    <nav class="ribbon" aria-label="Command manager">
      <div v-for="(group, g) in ribbon" :key="g" class="group">
        <button v-for="item in group" :key="item.icon" class="cmd" :class="[item.size, { tall: item.menu }]" :disabled="item.disabled" :aria-label="item.label">
          <svg class="i16"><use :href="'#' + item.icon" /></svg>
          <span v-for="line in item.lines" :key="line">{{ line }}</span>
          <i v-if="item.menu" class="caret"></i>
        </button>
      </div>
    </nav>

    <main class="work">
      <div class="cmd-tabs" role="tablist">
        <button v-for="(t, i) in tabs" :key="t" role="tab" :aria-selected="i === 0" :class="{ on: i === 0 }">{{ t }}</button>
      </div>

      <aside class="panel">
        <div class="panel-tabs">
          <button v-for="(t, i) in panelTabs" :key="t.icon" :class="{ on: i === 3 }" :aria-label="t.label"><svg class="i16"><use :href="'#' + t.icon" /></svg></button>
        </div>
        <div class="panel-tools">
          <button aria-label="View appearances"><svg class="i16"><use href="#ball" /></svg></button>
          <button aria-label="View decals"><svg class="i16"><use href="#decal" /></svg></button>
          <button class="on" aria-label="View scene, lights and cameras"><svg class="i16"><use href="#scenecam" /></svg></button>
          <button class="last" aria-label="Render options"><svg class="i16"><use href="#ball-list" /></svg></button>
        </div>
        <div class="panel-head"><h2>Scene, Lights, and Cameras</h2><button aria-label="Panel help">?</button></div>
        <ul class="tree">
          <li v-for="(n, i) in tree" :key="n.text" :class="{ child: n.level, lastchild: i === 2, final: i === 6, first: i === 0 }">
            <span class="rail"><i v-if="n.box" class="box" :class="{ plus: n.box === '+' }"></i></span>
            <span v-if="n.level" class="rail inner"></span>
            <svg class="i16"><use :href="'#' + n.icon" /></svg>
            <span class="name">{{ n.text }}</span>
          </li>
        </ul>
        <div class="hscroll">
          <button aria-label="Scroll left"><svg viewBox="0 0 8 8"><path d="M6 0L2 4l4 4" /></svg></button>
          <div class="track"><div class="thumb"></div></div>
          <button aria-label="Scroll right"><svg viewBox="0 0 8 8"><path d="M2 0l4 4-4 4" /></svg></button>
        </div>
        <button class="splitter" aria-label="Collapse panel"><i></i><i></i><i></i></button>
      </aside>

      <section class="viewport">
        <svg class="model" viewBox="555 130 200 480" role="img" aria-label="Wooden rack assembly">
          <defs>
            <linearGradient id="floor" x1="0" y1="0" x2="0" y2="1"><stop offset="0" stop-color="#6b5848" stop-opacity=".7" /><stop offset="1" stop-color="#6b5848" stop-opacity="0" /></linearGradient>
          </defs>
          <path d="M578 590l160-8 8 2-150 10z" fill="url(#floor)" />
          <path d="M604 587l112-4v2l-112 4z" fill="#4c4137" />
          <g filter="url(#grain)">
            <path d="M576 192l134-6 17 382-135 7z" fill="#7a4620" />
            <path d="M573 149l137-7v8l-137 7z" fill="#98552f" />
            <polygon v-for="s in shelfLines" :key="s.face" :points="s.face" fill="#864c27" />
            <path d="M591 568l135-6v8l-135 6z" fill="#864c27" />
            <path d="M563 146l11-1 17 445h-9z" fill="#9c5932" />
            <path d="M709 139l10-1 19 445h-10z" fill="#a5603a" />
            <path d="M590 580l14-3v9l-3 9h-11zM713 573l13-1 5 16h-11l-3-6z" fill="#6e3b1e" />
          </g>
          <g fill="none" stroke="#0f0805" stroke-width="1">
            <path d="M573 149l137-7M573 157l137-7M573 148l3 10" stroke-width="1.500" />
            <path d="M576 191l134-6M578 194l132-7" stroke-width="2" />
            <g v-for="s in shelfLines" :key="s.edge">
              <polygon :points="s.face" />
              <path :d="s.edge" stroke-width="2" />
            </g>
            <path d="M591 568l135-6M592 576l134-6" stroke-width="2" />
            <g v-for="s in slots" :key="s.points">
              <polygon :points="s.points" stroke-width="1.500" fill="#4a2713" fill-opacity=".35" />
              <path :d="s.shade" stroke-width="2" />
              <path v-if="s.lid" :d="s.lid" fill="#3a1f0f" fill-opacity=".6" />
            </g>
            <path d="M563 147l18 443h11M575 150l17 440M709 143l18 440M719 139l19 444h-10" stroke-width="2" />
            <path d="M575 157l1 35M577 200l14 370M708 150l18 425" stroke-width="3" />
            <path d="M564 148v-3h10v3zM709 141v-2h9v2z" stroke-width="2" fill="#54301b" />
            <path d="M590 580l14-3v9l-3 9h-11zM590 595l6-9 6 9M592 584h11M713 573l13-1 5 16h-11l-3-6zM720 588l3-8 8 8M716 578h12" stroke-width="2" />
          </g>
          <path d="M708 439h4l1 21h-4z" fill="#ff8300" />
        </svg>

        <div class="watermark"><span class="cjk">莫西网</span><span class="url">www.3dmox.com</span></div>
        <div class="tooltip" role="tooltip">Boss-Extrude1 of self&lt;9&gt;</div>

        <svg class="triad" viewBox="0 0 48 46" role="img" aria-label="Axis triad">
          <path d="M8 8v28h4V8z" fill="#168a16" /><path d="M10 6v30" stroke="#0a4b0a" stroke-width="2" />
          <path d="M10 9l4.500 10h-9z" fill="#126512" />
          <path d="M11 36h24v3H11z" fill="#2424c8" /><path d="M31 32l9 5-9 4z" fill="#1313a8" />
          <path d="M9 33v6l3-1z" fill="#d4301c" />
          <path d="M6 0l3 4 3-4M9 4v5" fill="none" stroke="#2b7d20" /><path d="M40 32h5l-5 8h5" fill="none" stroke="#2525c0" />
        </svg>

        <div class="view-tools">
          <template v-for="v in viewTools" :key="v.label">
            <button class="v-icon" :aria-label="v.label"><svg class="i16"><use :href="'#' + v.icon" /></svg></button>
            <button v-if="v.menu" class="v-menu" :aria-label="v.label + ' menu'"><i class="caret dim"></i></button>
          </template>
        </div>
        <div class="doc-buttons">
          <button v-for="d in docButtons" :key="d.icon" :aria-label="d.label"><svg class="i16"><use :href="'#' + d.icon" /></svg></button>
        </div>
        <div class="task-pane">
          <button v-for="(t, i) in taskPane" :key="t.label" :class="{ on: i === 4 }" :aria-label="t.label"><svg class="i16"><use :href="'#' + t.icon" /></svg></button>
        </div>
      </section>

      <aside class="side-tools">
        <div class="side-list">
          <button v-for="s in sideTools" :key="s" :aria-label="s"><svg class="i16"><use :href="'#' + s" /></svg></button>
        </div>
      </aside>
    </main>

    <div class="sheet-tabs">
      <button v-for="n in ['first', 'prev', 'next', 'last']" :key="n" class="nav" :class="n" :aria-label="'Scroll tabs: ' + n"><i></i></button>
      <button class="sheet on">Model</button>
      <button class="sheet study">Motion Study 1</button>
    </div>

    <footer class="status">
      <span class="edition">SolidWorks Premium 2014 x64 Edition</span>
      <span class="defined">Under Defined</span>
      <span class="editing">Editing Assembly</span>
      <button class="units">MMGS<i class="caret up"></i></button>
      <button class="helpbox" aria-label="Quick tips">?</button>
      <button class="tag" aria-label="Tags"><svg class="i16"><use href="#tag" /></svg></button>
    </footer>

    <div class="taskbar">
      <button v-for="(a, i) in apps" :key="a.label" class="app-btn" :class="{ sys: i < 3, on: i === 13 }" :aria-label="a.label">
        <svg class="i24"><use :href="'#' + a.icon" /></svg>
        <span v-if="a.letter" class="letter" :class="{ pair: a.letter.length > 1 }">{{ a.letter }}</span>
      </button>
      <div class="tray">
        <div class="charge"><div class="level"></div><span>43.1%</span></div>
        <button aria-label="Show hidden icons"><svg class="i16"><use href="#t-caret" /></svg></button>
        <button aria-label="Battery"><svg class="i16"><use href="#t-battery" /></svg></button>
        <button aria-label="Network"><svg class="i16"><use href="#t-wifi" /></svg></button>
        <button aria-label="Volume"><svg class="i16"><use href="#t-volume" /></svg></button>
        <button aria-label="Notifications"><svg class="i16"><use href="#t-action" /></svg></button>
        <button class="lang">ENG</button>
        <div class="clock"><span>21.39</span><span>26-10-17</span></div>
      </div>
    </div>
  </div>
</template>

<style>
body {
  margin: 0;
  background: #0a0a0b;
}
</style>

<style scoped>
.app {
  display: flex;
  flex-direction: column;
  height: 100vh;
  overflow: hidden;
  background: #d8dbe0;
  color: #111;
  font-family: "Open Sans", "Noto Sans", sans-serif;
  font-size: 11px;
  line-height: 16px;
}
.defs { display: block; flex: none; }
button {
  margin: 0;
  padding: 0;
  border: 0;
  background: none;
  color: inherit;
  font: inherit;
  display: flex;
  align-items: center;
  justify-content: center;
  flex: none;
}
.i16 { display: block; width: 16px; height: 16px; flex: none; }
.i24 { display: block; width: 24px; height: 24px; flex: none; }
.caret {
  border: 3px solid transparent;
  border-top-color: #333;
  border-bottom: 0;
  flex: none;
}
.caret.up { border-bottom: 3px solid #555; border-top: 0; }
.caret.dim { border-top-color: #3b3832; }

.titlebar {
  flex: none;
  display: flex;
  align-items: center;
  height: 28px;
  border-bottom: 1px solid #111;
  background: linear-gradient(#e1e4e7, #d3d7db);
}
.brand {
  flex: none;
  display: flex;
  align-items: center;
  gap: 4px;
  width: 122px;
  height: 28px;
  padding-left: 5px;
  border-left: 4px solid #dc2c1c;
  background: linear-gradient(#363c41, #1b1f23);
  color: #fff;
}
.ds { width: 22px; height: 20px; flex: none; }
.wordmark { font-size: 14px; font-style: italic; padding-top: 5px; }
.brand-arrow { width: 11px; height: 28px; background: #8e9195; }
.right-caret { border: 3px solid transparent; border-left: 4px solid #333; border-right: 0; }
.quick { display: flex; align-items: center; margin-left: 28px; padding-top: 2px; }
.q-icon { width: 20px; height: 24px; }
.q-menu { width: 16px; height: 24px; }
.q-wide { width: 23px; height: 24px; }
.q-wide + .q-menu { width: 12px; }
.select-tool { display: flex; border: 1px solid #888; height: 20px; background: #e8eaed; }
.pick { width: 20px; background: #aeb1b5; border-right: 1px solid #888; }
.pick-menu { width: 13px; }
.doc-title { flex: 1; text-align: center; padding: 2px 0 0; color: #333; }
.searchbox {
  flex: none;
  display: flex;
  align-items: center;
  gap: 6px;
  box-sizing: border-box;
  width: 202px;
  height: 24px;
  padding: 0 4px 0 5px;
  border: 1px solid #222;
  background: #eef0f3;
}
.searchbox input {
  flex: 1;
  min-width: 0;
  padding: 0;
  border: 0;
  outline: 0;
  background: none;
  font: inherit;
}
.searchbox input::placeholder { color: #666; opacity: 1; }
.win-buttons { flex: none; display: flex; padding-left: 5px; margin-right: -4px; }
.win-buttons button { width: 23px; height: 24px; }
.win-buttons .slim { width: 12px; }

.ribbon {
  flex: none;
  display: flex;
  height: 76px;
  padding-left: 1px;
  border-bottom: 1px solid #111;
  background: #d8dadf;
}
.group { display: flex; padding-right: 1px; }
.group::after {
  content: "";
  align-self: center;
  width: 1px;
  height: 66px;
  background: #333;
}
.group:last-child::after { display: none; }
.cmd {
  flex-direction: column;
  justify-content: flex-start;
  padding-top: 14px;
  line-height: 13px;
  white-space: nowrap;
}
.cmd.tall { padding-top: 8px; }
.cmd .caret { margin-top: 12px; }
.cmd:disabled { color: #96989c; }
.w40 { width: 40px; }
.w50 { width: 49px; }
.w59 { width: 58px; }
.w60 { width: 60px; }
.w62 { width: 62px; }
.w66 { width: 66px; }
.w74 { width: 74px; }
.w78 { width: 77px; }

.work { flex: 1; display: flex; min-height: 0; position: relative; }
.cmd-tabs { position: absolute; left: 0; top: 0; z-index: 2; display: flex; height: 20px; background: #d8dadf; }
.cmd-tabs button {
  height: 19px;
  padding: 0 9px 1px;
  border-right: 1px solid #111;
  border-bottom: 1px solid #111;
  background: #aaacb0;
  color: #222;
}
.cmd-tabs button:nth-child(2), .cmd-tabs button:nth-child(3) { padding: 0 10px 1px; }
.cmd-tabs button.on { height: 20px; padding: 0 7px 1px 8px; border-bottom: 0; background: #d8dadf; font-weight: 700; color: #111; }

.panel {
  flex: none;
  display: flex;
  flex-direction: column;
  box-sizing: border-box;
  width: 190px;
  padding-top: 23px;
  border-right: 2px solid #222;
  background: #e2e6eb;
  position: relative;
}
.panel-tabs {
  display: flex;
  flex: none;
  height: 22px;
  padding-top: 5px;
  border-top: 1px solid #555;
  background: #d8dadf;
}
.panel-tabs::after { content: ""; flex: 1; border-bottom: 1px solid #222; }
.panel-tabs button { width: 28px; border: 1px solid #111; border-left: 0; background: #a6a8ac; }
.panel-tabs .on { border-bottom-color: #e2e6eb; background: #e2e6eb; }
.panel-tools { flex: none; display: flex; align-items: center; height: 25px; padding: 0 4px 0 2px; border-bottom: 1px solid #777; }
.panel-tools button { width: 23px; height: 21px; }
.panel-tools .on { background: #b9d5f2; outline: 1px solid #94bfe8; }
.panel-tools .last { margin-left: auto; }
.panel-head {
  flex: none;
  display: flex;
  align-items: center;
  justify-content: space-between;
  height: 21px;
  padding: 0 5px 0 11px;
  border-bottom: 1px solid #777;
  background: #a9abaf;
}
.panel-head h2 { margin: 0; font-size: 11px; line-height: 16px; font-weight: 700; color: #222; white-space: nowrap; }
.panel-head button { font-size: 12px; font-weight: 700; color: #eee; }
.tree { flex: 1; min-height: 0; margin: 0; padding: 12px 0 0 2px; list-style: none; overflow: hidden; font-size: 12px; }
.tree li { display: flex; align-items: center; height: 18px; white-space: nowrap; }
.rail {
  flex: none;
  display: flex;
  align-items: center;
  width: 19px;
  height: 18px;
  background:
    linear-gradient(90deg, transparent 8px, #999 8px, #999 9px, transparent 9px),
    repeating-linear-gradient(90deg, transparent 0 1px, #999 1px 2px) 9px 9px / 10px 1px no-repeat;
}
.child .rail:first-child { background: linear-gradient(90deg, transparent 8px, #999 8px, #999 9px, transparent 9px); }
.first .rail {
  background: linear-gradient(#999, #999) 8px 9px / 1px 9px no-repeat, repeating-linear-gradient(90deg, transparent 0 1px, #999 1px 2px) 9px 9px / 10px 1px no-repeat;
}
.final .rail, .lastchild .inner {
  background: linear-gradient(#999, #999) 8px 0 / 1px 9px no-repeat, repeating-linear-gradient(90deg, transparent 0 1px, #999 1px 2px) 9px 9px / 10px 1px no-repeat;
}
.box {
  box-sizing: border-box;
  width: 9px;
  height: 9px;
  margin-left: 4px;
  border: 1px solid #888;
  background: linear-gradient(#333, #333) center / 5px 1px no-repeat, #fff;
}
.box.plus { background: linear-gradient(#333, #333) center / 5px 1px no-repeat, linear-gradient(#333, #333) center / 1px 5px no-repeat, #fff; }
.name { margin-left: 5px; }
.hscroll { flex: none; display: flex; height: 17px; margin-bottom: 3px; background: #f0f0f0; }
.hscroll button { width: 16px; }
.hscroll svg { width: 8px; height: 8px; fill: none; stroke: #333; stroke-width: 2; }
.track { flex: 1; }
.thumb { width: 87%; height: 17px; background: #cdcdcd; }
.splitter {
  position: absolute;
  right: -9px;
  top: 274px;
  z-index: 3;
  width: 9px;
  height: 38px;
  border: 1px solid #222;
  background: #eef0f3;
  flex-direction: column;
  gap: 4px;
}
.splitter i { border: 2px solid transparent; border-right: 3px solid #333; border-left: 0; }

.viewport {
  flex: 1;
  position: relative;
  overflow: hidden;
  min-width: 0;
  border-bottom: 1px solid #222;
  background: linear-gradient(#14110c 0%, #3b342c 18%, #665c51 42%, #85786a 54%, #c4ae98 80%, #f6dec5 100%);
}
.model { position: absolute; left: 365px; top: 24px; width: 200px; height: 480px; }
.watermark {
  position: absolute;
  left: 216px;
  top: 235px;
  display: flex;
  align-items: flex-start;
  color: #e3dfda;
  text-shadow: 1px 1px 0 #40382f;
  white-space: nowrap;
}
.cjk { font-family: "Noto Sans CJK SC", sans-serif; font-weight: 300; font-size: 57px; line-height: 72px; }
.url { font-family: "Liberation Mono", monospace; font-size: 48px; line-height: 72px; padding-top: 10px; }
.tooltip {
  position: absolute;
  left: 517px;
  top: 376px;
  padding: 0 7px 1px 5px;
  border: 1px solid #888;
  background: #fff;
  box-shadow: 3px 3px 2px rgba(40, 30, 20, 0.6);
  color: #555;
  line-height: 17px;
  white-space: nowrap;
}
.triad { position: absolute; left: 29px; bottom: 50px; width: 48px; height: 46px; }
.view-tools { position: absolute; left: 50%; top: 2px; display: flex; width: 300px; margin-left: -153px; opacity: 0.85; }
.v-icon { width: 23px; height: 22px; }
.v-menu { width: 14px; height: 22px; }
.doc-buttons { position: absolute; right: 7px; top: 3px; display: flex; }
.doc-buttons button { width: 23px; height: 22px; }
.task-pane { position: absolute; right: 0; top: 59px; display: flex; flex-direction: column; gap: 1px; border: 1px solid #333; border-right: 0; background: #333; }
.task-pane button { width: 22px; height: 23px; background: #b3b5b9; }
.task-pane .on { background: #e6e9ed; }

.side-tools { flex: none; box-sizing: border-box; width: 26px; border-bottom: 1px solid #222; background: #e2e6eb; }
.side-list { padding: 13px 0 6px; border-bottom: 1px solid #999; background: radial-gradient(circle, #333 1px, transparent 1px) 2px 4px / 4px 4px repeat-x, #d8dadf; }
.side-list button { width: 28px; height: 23px; }

.sheet-tabs { flex: none; display: flex; height: 15px; padding-left: 2px; border-bottom: 1px solid #222; background: #e2e6eb; }
.nav { width: 16px; background: #b9bbc0; outline: 1px solid #d3d5d9; outline-offset: -1px; }
.nav i { border: 4px solid transparent; border-right-color: #96989d; border-left: 0; }
.nav.next i, .nav.last i { border-right: 0; border-left: 4px solid #96989d; }
.nav.first::before, .nav.last::after { content: ""; width: 1px; height: 8px; background: #96989d; }
.sheet { height: 15px; border: 1px solid #222; border-top: 0; font-size: 12px; line-height: 14px; }
.sheet.on { width: 56px; margin-left: 2px; font-weight: 700; background: #e8ebef; border-right: 0; }
.sheet.study { width: 105px; padding-right: 8px; background: #aaacb0; color: #222; }

.status { flex: none; display: flex; align-items: center; box-sizing: border-box; height: 18px; padding: 1px 2px 0; background: #d8dadf; }
.edition { flex: 1; }
.defined { width: 94px; }
.editing { width: 144px; }
.units { width: 78px; justify-content: flex-start; gap: 22px; }
.helpbox { box-sizing: border-box; width: 13px; height: 13px; margin-right: 49px; border: 1px solid #258030; background: #f1faf1; color: #1c7427; font-weight: 700; line-height: 11px; }

.taskbar { flex: none; display: flex; height: 36px; background: linear-gradient(100deg, #060607, #141416 45%, #08080a 60%, #101013); color: #fff; font-size: 12px; }
.app-btn { width: 49px; height: 36px; padding-top: 3px; position: relative; }
.app-btn.sys { width: 48px; }
.app-btn.on { background: #3a3a3d; }
.letter { position: absolute; left: 13px; top: 12px; width: 14px; text-align: center; font-size: 11px; font-weight: 700; line-height: 16px; }
.letter.pair { width: 24px; font-weight: 800; }
.tray { display: flex; align-items: center; margin-left: auto; padding: 2px 3px 0 0; }
.charge {
  box-sizing: border-box;
  position: relative;
  width: 55px;
  height: 24px;
  margin-right: 7px;
  border: 1px solid #fff;
  display: flex;
  align-items: center;
  justify-content: center;
  font-size: 13px;
}
.charge::after { content: ""; position: absolute; right: -4px; top: 5px; width: 2px; height: 12px; border: 1px solid #fff; border-left: 0; background: #0c0c0e; }
.level { position: absolute; left: 0; top: 0; width: 43%; height: 22px; background: linear-gradient(90deg, #12803a, #2fa858); }
.charge span { position: relative; }
.tray button { width: 24px; height: 34px; }
.tray .lang { width: 36px; }
.clock { display: flex; flex-direction: column; align-items: center; width: 65px; line-height: 17px; }
</style>
